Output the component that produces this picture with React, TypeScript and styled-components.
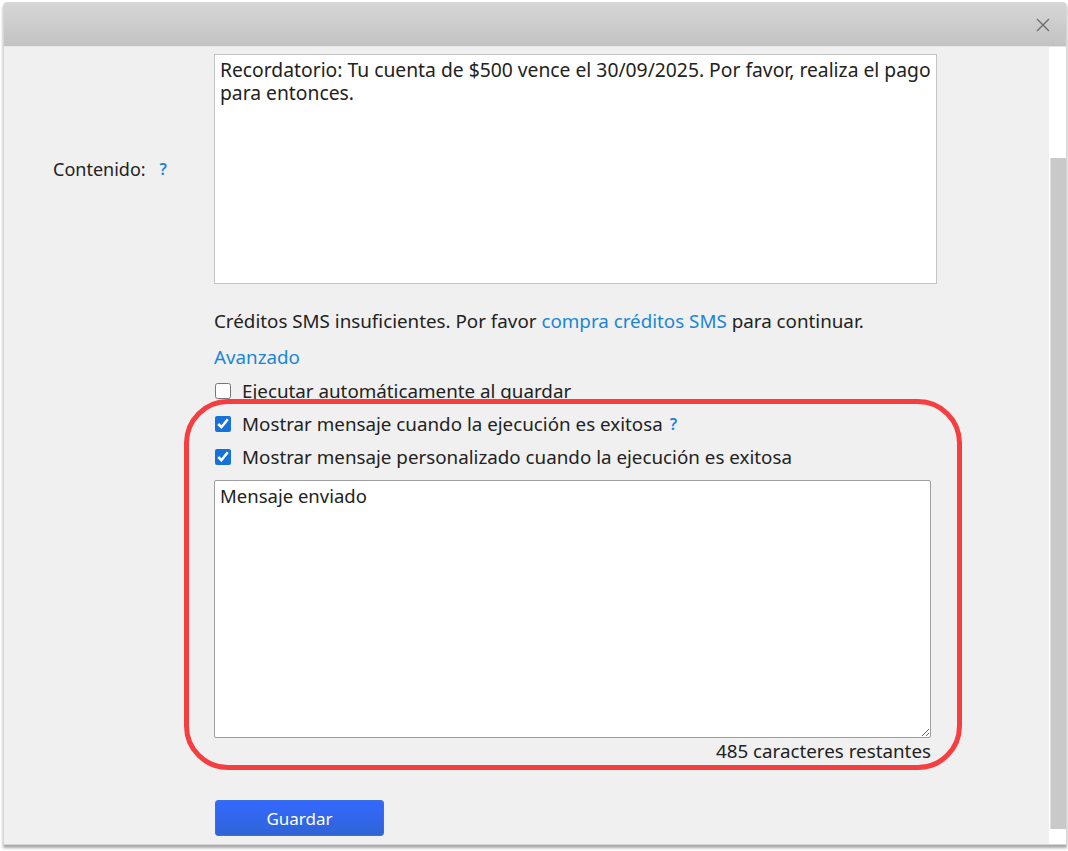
import React from 'react';
import styled, { createGlobalStyle } from 'styled-components';

const GlobalStyle = createGlobalStyle`
    html, body {
        margin: 0;
        padding: 0;
        background: #ffffff;
        overflow: hidden;
    }
    * {
        box-sizing: border-box;
    }
`;

export default function App() {
    return (<>
        <GlobalStyle />
        <Page>
            <Dialog>
                <Header>
                    <CloseButton aria-label="Cerrar">
                        <svg width="14" height="14" viewBox="0 0 14 14">
                            <path d="M1 1 L13 13 M13 1 L1 13" stroke="#6a6a6a" strokeWidth="1.3" fill="none" />
                        </svg>
                    </CloseButton>
                </Header>
                <Body>
                    <Content>
                        <FormRow>
                            <Label>
                                Contenido:<Help $gap={14}>?</Help>
                            </Label>
                            <MessageBox
                                readOnly
                                value="Recordatorio: Tu cuenta de $500 vence el 30/09/2025. Por favor, realiza el pago para entonces."
                            />
                        </FormRow>
                        <Fields>
                            <Notice>
                                Créditos SMS insuficientes. Por favor <Link>compra créditos SMS</Link> para continuar.
                            </Notice>
                            <AdvancedLink>Avanzado</AdvancedLink>
                            <CheckRow>
                                <Check type="checkbox" />
                                Ejecutar automáticamente al guardar
                            </CheckRow>
                            <Highlight>
                                <CheckRow>
                                    <Check type="checkbox" defaultChecked />
                                    Mostrar mensaje cuando la ejecución es exitosa<Help $gap={7}>?</Help>
                                </CheckRow>
                                <CheckRow>
                                    <Check type="checkbox" defaultChecked />
                                    Mostrar mensaje personalizado cuando la ejecución es exitosa
                                </CheckRow>
                                <CustomBox defaultValue="Mensaje enviado" />
                                <Counter>485 caracteres restantes</Counter>
                            </Highlight>
                            <SaveButton>Guardar</SaveButton>
                        </Fields>
                    </Content>
                    <ScrollTrack>
                        <ScrollThumb />
                    </ScrollTrack>
                </Body>
            </Dialog>
        </Page>
    </>);
}

const Page = styled.div`
    height: 851px;
    padding: 2px 1px 6px 3px;
    font-family: "Noto Sans", "Open Sans", sans-serif;
    color: #222222;
`;

const Dialog = styled.div`
    height: 843px;
    display: flex;
    flex-direction: column;
    background: #f0f0f0;
    border: 1px solid #d6d6d6;
    border-radius: 4px 4px 0 0;
    box-shadow: 0 3px 3px rgba(0, 0, 0, 0.35);
    overflow: hidden;
`;

const Header = styled.div`
    height: 44px;
    flex-shrink: 0;
    display: flex;
    align-items: center;
    justify-content: flex-end;
    padding-right: 16px;
    background: linear-gradient(#d6d6d6, #c3c3c3);
    border-bottom: 1px solid #e6e6e6;
`;

const CloseButton = styled.button`
    border: none;
    background: transparent;
    padding: 0;
    width: 14px;
    height: 14px;
    display: flex;
    cursor: pointer;
`;

const Body = styled.div`
    flex: 1;
    display: flex;
    min-height: 0;
`;

const Content = styled.div`
    flex: 1;
    padding-top: 7px;
    overflow: hidden;
`;

const FormRow = styled.div`
    display: grid;
    grid-template-columns: 210px 723px;
    align-items: center;
`;

const Label = styled.div`
    padding-left: 49px;
    font-size: 18px;
    display: flex;
    align-items: center;
`;

const Help = styled.span<{ $gap: number }>`
    color: #1a86d6;
    font-weight: 600;
    font-size: 16px;
    margin-left: ${p => p.$gap}px;
`;

const MessageBox = styled.textarea`
    height: 230px;
    width: 723px;
    resize: none;
    border: 1px solid #c4c4c4;
    background: #ffffff;
    padding: 3px 5px;
    font-family: inherit;
    font-size: 19.3px;
    line-height: 23px;
    color: #222222;
    outline: none;
`;

const Fields = styled.div`
    padding-left: 210px;
    padding-top: 24px;
    width: 933px;
    font-size: 18.8px;
`;

const Notice = styled.div`
    line-height: 26px;
`;

const Link = styled.span`
    color: #1a86d6;
    cursor: pointer;
`;

const AdvancedLink = styled(Link)`
    display: block;
    line-height: 26px;
    margin-top: 10px;
    margin-bottom: 4px;
`;

const CheckRow = styled.label`
    display: flex;
    align-items: center;
    height: 33px;
`;

const Check = styled.input`
    width: 16px;
    height: 16px;
    margin: 0 11px 0 1px;
    accent-color: #1672d8;
`;

const Highlight = styled.div`
    position: relative;
    width: 717px;
    &::after {
        content: "";
        position: absolute;
        top: -8px;
        bottom: -6px;
        left: -30px;
        right: -31px;
        border: 5px solid #f63d3f;
        border-radius: 44px;
        pointer-events: none;
    }
`;

const CustomBox = styled.textarea`
    display: block;
    width: 717px;
    height: 258px;
    margin-top: 7px;
    border: 1px solid #9e9e9e;
    border-radius: 2px;
    background: #ffffff;
    padding: 3px 5px;
    font-family: inherit;
    font-size: 18.5px;
    line-height: 23px;
    color: #222222;
    outline: none;
`;

const Counter = styled.div`
    text-align: right;
    line-height: 26px;
`;

const SaveButton = styled.button`
    margin-top: 36px;
    margin-left: 1px;
    width: 169px;
    height: 36px;
    border: 1px solid #3a6fe0;
    border-radius: 3px;
    background: linear-gradient(#3468ff, #2f64d6);
    color: #ffffff;
    font-family: inherit;
    font-size: 17px;
    cursor: pointer;
`;

const ScrollTrack = styled.div`
    width: 17px;
    flex-shrink: 0;
    background: #ffffff;
    padding: 111px 0 15px 1px;
    display: flex;
`;

const ScrollThumb = styled.div`
    flex: 1;
    background: #c9c9c9;
    border-left: 1px solid #dedede;
`;
